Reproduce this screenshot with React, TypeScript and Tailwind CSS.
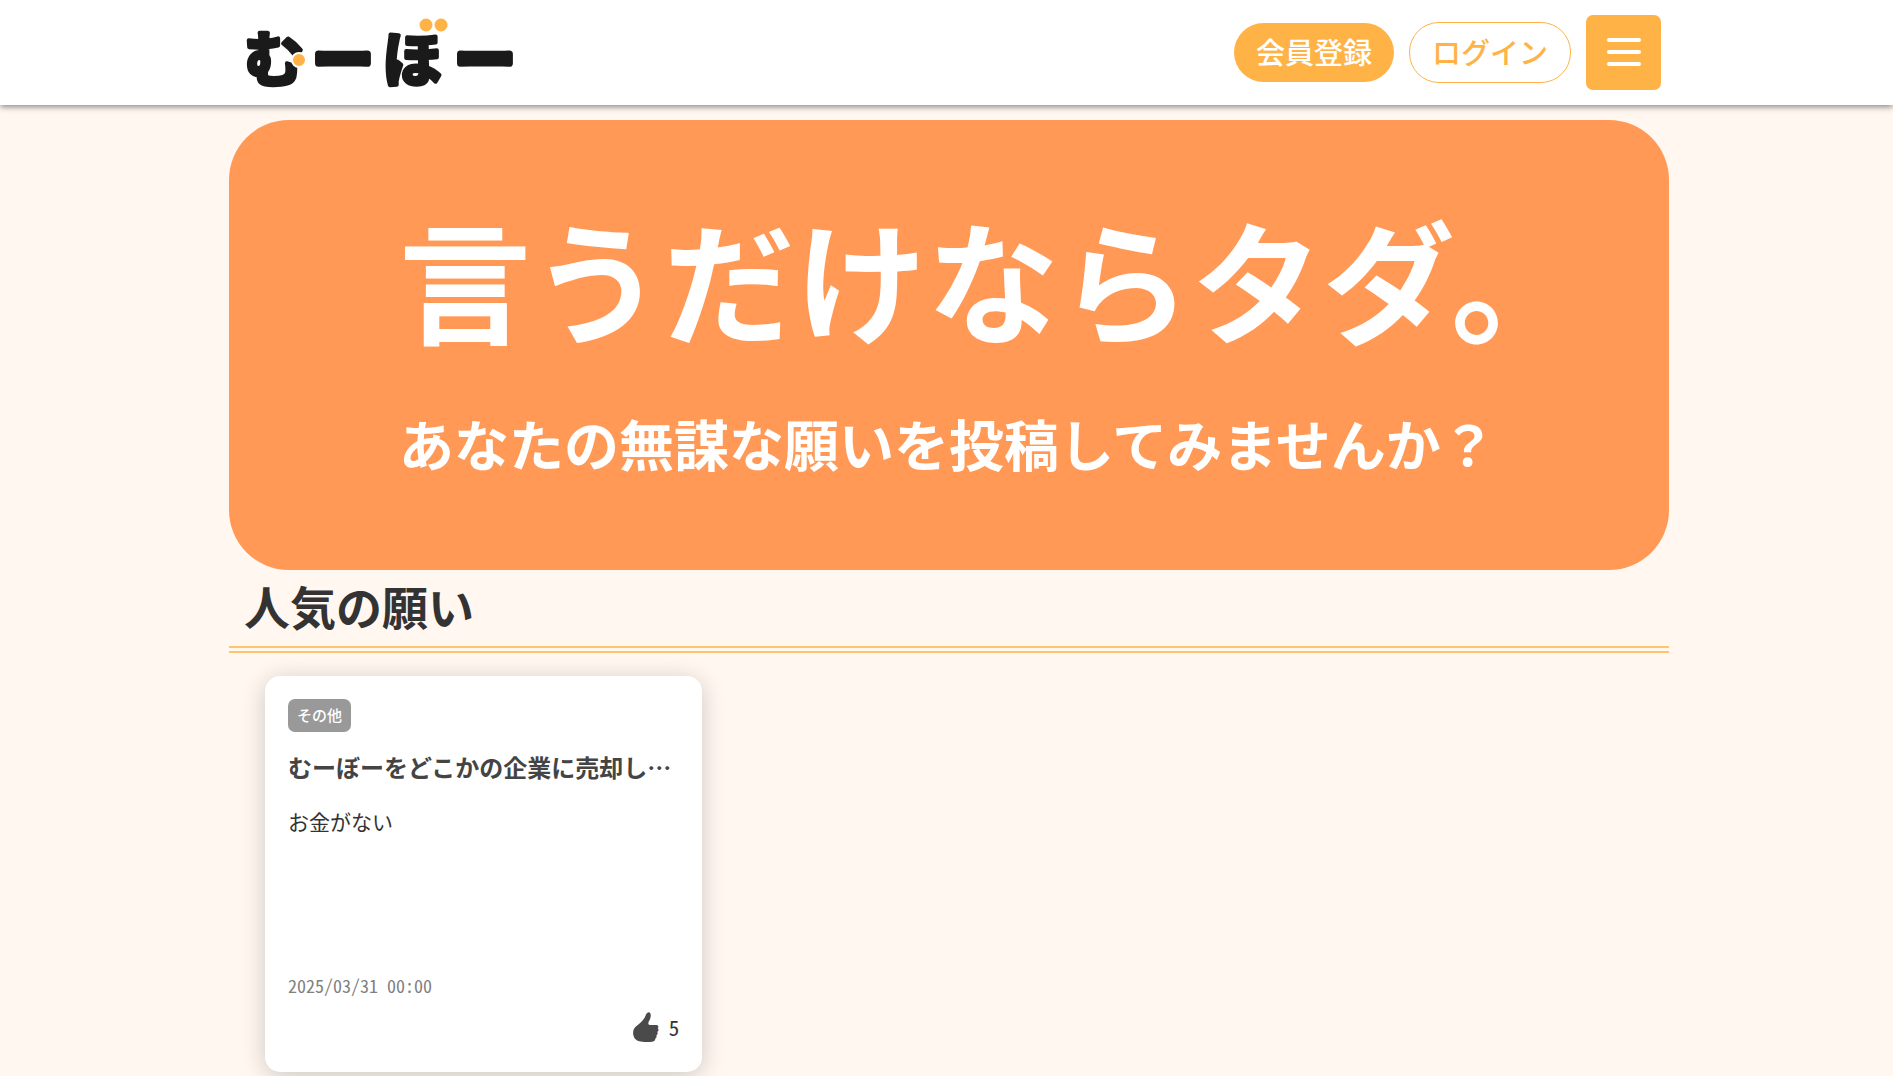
const wishes = [
  {
    id: 1,
    category: "その他",
    title: "むーぼーをどこかの企業に売却し…",
    body: "お金がない",
    date: "2025/03/31 00:00",
    likes: 5,
  },
];

// The dots of the wordmark are orange, so the dakuten is drawn apart from its letter.
function Logo() {
  return (
    <svg width="284" height="97" viewBox="0 0 284 97" role="img" aria-label="むーぼー">
      <g
        fill="#1a1a1a"
        stroke="#1a1a1a"
        strokeWidth="4"
        strokeLinejoin="round"
        fontSize="60"
        fontWeight="700"
      >
        <text x="5" y="78">む</text>
        <text x="74" y="78" strokeWidth="7">ー</text>
        <text x="143" y="78">ほ</text>
        <text x="216" y="78" strokeWidth="7">ー</text>
      </g>
      <circle cx="60" cy="56" r="7" fill="#ffb347" stroke="#fff" strokeWidth="2" />
      <circle cx="187" cy="21" r="6.5" fill="#ffb347" />
      <circle cx="202" cy="21" r="6.5" fill="#ffb347" />
    </svg>
  );
}

function ThumbIcon() {
  return (
    <svg width="26" height="30" viewBox="0 0 26 30" fill="#4a4a4a" aria-hidden="true">
      <path d="M14.2 1C15 0 16.600 0 17.300 1.200C18.300 3.400 17.500 6.800 15.800 9.500C15 11 15.200 12.900 16.800 12.900H23.500C25.400 12.900 26 15 24.800 16.200C26 17.200 25.600 19.400 24.300 19.900C25 21.100 24.500 22.900 23.300 23.400C23.900 24.700 23.200 26 22.400 26.300C22.400 28.300 21.300 29.600 19.300 29.700C14.500 30.100 9.500 30.100 6.200 29.300C2.400 28.300 .3 25.300 .1 21.300C0 17.500 1.500 15.400 4.500 13.200C8.500 10.200 11.200 7.200 12.600 3.600C13.100 2.400 13.500 1.700 14.200 1Z" />
    </svg>
  );
}

export default function App() {
  return (
    <div
      lang="ja"
      className="min-h-screen overflow-x-hidden bg-[#fff7f0] pb-1 font-['Noto_Sans_CJK_JP',sans-serif] text-[#333]"
    >
      <header className="bg-white pl-[5px] shadow-[0_2px_6px_rgba(0,0,0,0.45)]">
        <div className="mx-auto flex max-w-[1440px] items-center justify-between py-1 pr-2 pl-[10px]">
          <a href="#">
            <Logo />
          </a>
          <nav className="flex items-center gap-[15px] text-[29px] font-medium">
            <a
              href="#register"
              className="rounded-[30px] bg-[#ffb347] px-[22px] pb-0.5 leading-[57px] text-white"
            >
              会員登録
            </a>
            <a
              href="#login"
              className="rounded-[30px] border border-[#ffb347] px-[22px] pb-0.5 leading-[57px] text-[#ffb347]"
            >
              ログイン
            </a>
            <button
              type="button"
              aria-label="メニュー"
              className="flex size-[75px] flex-col items-center justify-center gap-2 rounded-[7px] bg-[#ffb347] pb-px"
            >
              <span className="h-1 w-[34px] rounded-sm bg-white" />
              <span className="h-1 w-[34px] rounded-sm bg-white" />
              <span className="h-1 w-[34px] rounded-sm bg-white" />
            </button>
          </nav>
        </div>
      </header>

      <main className="pt-[15px] pl-[5px]">
        <div className="mx-auto max-w-[1440px]">
          <section className="flex justify-center rounded-[60px] bg-[#ff9955] pt-16 pb-[88px] font-bold text-white">
            <div className="w-[1100px] whitespace-nowrap">
              <h1 className="text-[132px] leading-[186px]">言うだけならタダ。</h1>
              <p className="mt-8 text-[55px] leading-[80px]">
                あなたの無謀な願いを投稿してみませんか？
              </p>
            </div>
          </section>

          <h2 className="border-b-[7px] border-double border-[#ffc56e] px-[15px] pb-1.5 text-[46px] leading-[70px] font-bold">
            人気の願い
          </h2>

          <div className="mt-[23px] grid grid-cols-3 gap-7 px-9">
            {wishes.map((wish) => (
              <article
                key={wish.id}
                className="flex h-[396px] flex-col rounded-[15px] bg-white p-[23px] shadow-[0_4px_25px_rgba(0,0,0,0.2)]"
              >
                <span className="w-fit rounded-[7px] bg-[#999] px-[9px] pb-0.5 text-[15px] leading-[31px] font-medium text-white">
                  {wish.category}
                </span>
                <h3 className="mt-[17px] truncate text-[24px] leading-9 font-bold text-[#444]">{wish.title}</h3>
                <p className="mt-5 text-[21px] leading-8">{wish.body}</p>
                <time className="mt-auto text-[18px] leading-7 text-[#808080] [font-feature-settings:'hwid']">
                  {wish.date}
                </time>
                <button
                  type="button"
                  aria-label="いいね"
                  className="mt-2 mb-0.5 flex items-center gap-2.5 self-end text-[21px] leading-10 [font-feature-settings:'hwid']"
                >
                  <ThumbIcon />
                  {wish.likes}
                </button>
              </article>
            ))}
          </div>
        </div>
      </main>
    </div>
  );
}
